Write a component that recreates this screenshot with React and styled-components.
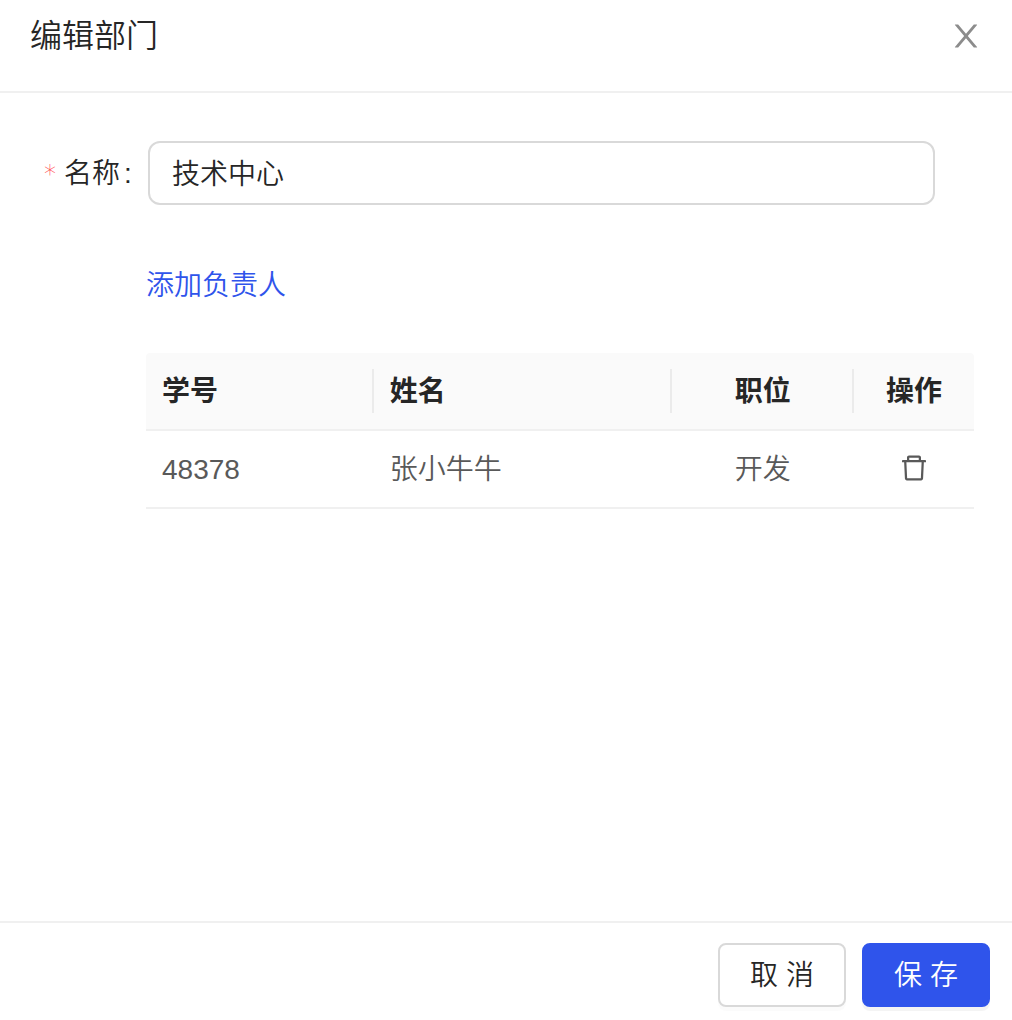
import React, { useState } from "react";
import styled, { createGlobalStyle } from "styled-components";

const GlobalStyle = createGlobalStyle`
  *, *::before, *::after { box-sizing: border-box; }
  body {
    margin: 0;
    background: #fff;
    color: #262626;
    font-family: "Liberation Sans", "Noto Sans CJK SC", sans-serif;
    font-size: 28px;
    line-height: 44px;
    font-weight: 350;
  }
  button, input { font: inherit; color: inherit; }
`;

const Drawer = styled.form`
  display: flex;
  flex-direction: column;
  min-height: 100vh;
`;

const Header = styled.header`
  display: flex;
  align-items: center;
  justify-content: space-between;
  padding: 14px 28px 33px 30px;
  border-bottom: 2px solid #f0f0f0;
`;

const Title = styled.h1`
  margin: 0;
  font-size: 32px;
  line-height: 44px;
  font-weight: 350;
`;

const IconButton = styled.button`
  display: flex;
  padding: 0;
  border: 0;
  background: none;
  color: ${({ $color }) => $color};
  cursor: pointer;
`;

const Icon = styled.svg`
  width: ${({ $size }) => $size}px;
  height: ${({ $size }) => $size}px;
  fill: currentColor;
`;

const Body = styled.main`
  flex: 1;
  padding: 48px 38px 48px 44px;
`;

const Field = styled.div`
  display: flex;
  align-items: center;
  padding-right: 39px;
`;

const Label = styled.label`
  display: flex;
  flex: none;
  align-items: center;
  width: 104px;
  padding-top: 2px;
`;

const Required = styled.span`
  width: 20px;
  color: #ff4d4f;
  font-family: "DejaVu Sans", sans-serif;
  font-weight: 200;
  font-size: 24px;
`;

const Colon = styled.span`
  margin-left: 4px;
`;

const TextInput = styled.input`
  flex: 1;
  min-width: 0;
  height: 64px;
  padding: 0 22px 2px;
  border: 2px solid #d9d9d9;
  border-radius: 12px;
  background: #fff;
  outline: none;

  &:focus { border-color: #2f54eb; }
`;

const Leaders = styled.section`
  padding-left: 102px;
`;

const AddLink = styled.a`
  display: inline-block;
  margin: 59px 0 45px;
  color: #2f54eb;
  text-decoration: none;
`;

const Table = styled.table`
  width: 100%;
  table-layout: fixed;
  border-collapse: separate;
  border-spacing: 0;
`;

const Column = styled.col`
  width: ${({ $width }) => $width};
`;

const HeadCell = styled.th`
  height: 78px;
  padding: 0;
  background: #fafafa;
  border-bottom: 2px solid #f0f0f0;
  font-weight: 600;
  text-align: ${({ $align }) => $align || "left"};

  &:first-child { border-top-left-radius: 4px; }
  &:last-child { border-top-right-radius: 4px; }
`;

const HeadLabel = styled.div`
  height: 44px;
  padding: 1px 14px 0 16px;
  border-right: 2px solid ${({ $last }) => ($last ? "transparent" : "#ebebeb")};
`;

const Cell = styled.td`
  height: 78px;
  padding: 2px 16px 0;
  border-bottom: 2px solid #f0f0f0;
  color: #595959;
  text-align: ${({ $align }) => $align || "left"};
  vertical-align: middle;
`;

const Actions = styled.div`
  display: flex;
  justify-content: center;
  padding-bottom: 4px;
`;

const Footer = styled.footer`
  display: flex;
  justify-content: flex-end;
  gap: 16px;
  padding: 20px 22px 13px;
  border-top: 2px solid #f0f0f0;
`;

const Button = styled.button`
  width: 128px;
  height: 64px;
  padding: 2px 0 0;
  border: 2px solid ${({ $primary }) => ($primary ? "#2f54eb" : "#d9d9d9")};
  border-radius: 8px;
  background: ${({ $primary }) => ($primary ? "#2f54eb" : "#fff")};
  color: ${({ $primary }) => ($primary ? "#fff" : "#262626")};
  box-shadow: 0 4px 0 rgba(0, 0, 0, ${({ $primary }) => ($primary ? 0.045 : 0.016)});
  cursor: pointer;
`;

const CloseIcon = () => (
  <Icon $size={36} viewBox="0 0 1024 1024" aria-hidden="true">
    <path d="M563.8 512l262.5-312.9c4.4-5.2.7-13.1-6.1-13.1h-79.8c-4.7 0-9.2 2.1-12.3 5.7L511.6 449.8 295.1 191.7c-3-3.6-7.5-5.7-12.3-5.7H203c-6.8 0-10.5 7.9-6.1 13.1L459.4 512 196.9 824.9A7.95 7.95 0 0 0 203 838h79.8c4.7 0 9.2-2.1 12.3-5.7l216.5-258.1 216.5 258.1c3 3.6 7.5 5.7 12.3 5.7h79.8c6.8 0 10.5-7.9 6.1-13.1L563.8 512z" />
  </Icon>
);

const DeleteIcon = () => (
  <Icon $size={32} viewBox="0 0 1024 1024" aria-hidden="true">
    <path d="M360 184h-8c4.4 0 8-3.6 8-8v8h304v-8c0 4.4 3.6 8 8 8h-8v72h72v-80c0-35.3-28.7-64-64-64H352c-35.3 0-64 28.7-64 64v80h72v-72zm504 72H160c-17.7 0-32 14.3-32 32v32c0 4.4 3.6 8 8 8h60.4l24.7 523c1.6 34.1 29.8 61 63.9 61h454c34.2 0 62.3-26.8 63.9-61l24.7-523H888c4.4 0 8-3.6 8-8v-32c0-17.7-14.3-32-32-32zM731.3 840H292.7l-24.2-512h487l-24.2 512z" />
  </Icon>
);

const people = [{ id: "48378", name: "张小牛牛", role: "开发" }];

export default function App() {
  const [name, setName] = useState("技术中心");

  return (
    <>
      <GlobalStyle />
      <Drawer onSubmit={(e) => e.preventDefault()}>
        <Header>
          <Title>编辑部门</Title>
          <IconButton type="button" $color="#8c8c8c" aria-label="关闭">
            <CloseIcon />
          </IconButton>
        </Header>
        <Body>
          <Field>
            <Label htmlFor="department-name">
              <Required>*</Required>
              名称
              <Colon>:</Colon>
            </Label>
            <TextInput
              id="department-name"
              required
              value={name}
              onChange={(e) => setName(e.target.value)}
            />
          </Field>
          <Leaders>
            <AddLink href="#add">添加负责人</AddLink>
            <Table>
              <colgroup>
                <Column $width="27.5%" />
                <Column $width="36%" />
                <Column $width="22%" />
                <Column />
              </colgroup>
              <thead>
                <tr>
                  <HeadCell><HeadLabel>学号</HeadLabel></HeadCell>
                  <HeadCell><HeadLabel>姓名</HeadLabel></HeadCell>
                  <HeadCell $align="center"><HeadLabel>职位</HeadLabel></HeadCell>
                  <HeadCell $align="center"><HeadLabel $last>操作</HeadLabel></HeadCell>
                </tr>
              </thead>
              <tbody>
                {people.map((person) => (
                  <tr key={person.id}>
                    <Cell>{person.id}</Cell>
                    <Cell>{person.name}</Cell>
                    <Cell $align="center">{person.role}</Cell>
                    <Cell $align="center">
                      <Actions>
                        <IconButton type="button" $color="#595959" aria-label="删除">
                          <DeleteIcon />
                        </IconButton>
                      </Actions>
                    </Cell>
                  </tr>
                ))}
              </tbody>
            </Table>
          </Leaders>
        </Body>
        <Footer>
          <Button type="button">取 消</Button>
          <Button type="submit" $primary>保 存</Button>
        </Footer>
      </Drawer>
    </>
  );
}
